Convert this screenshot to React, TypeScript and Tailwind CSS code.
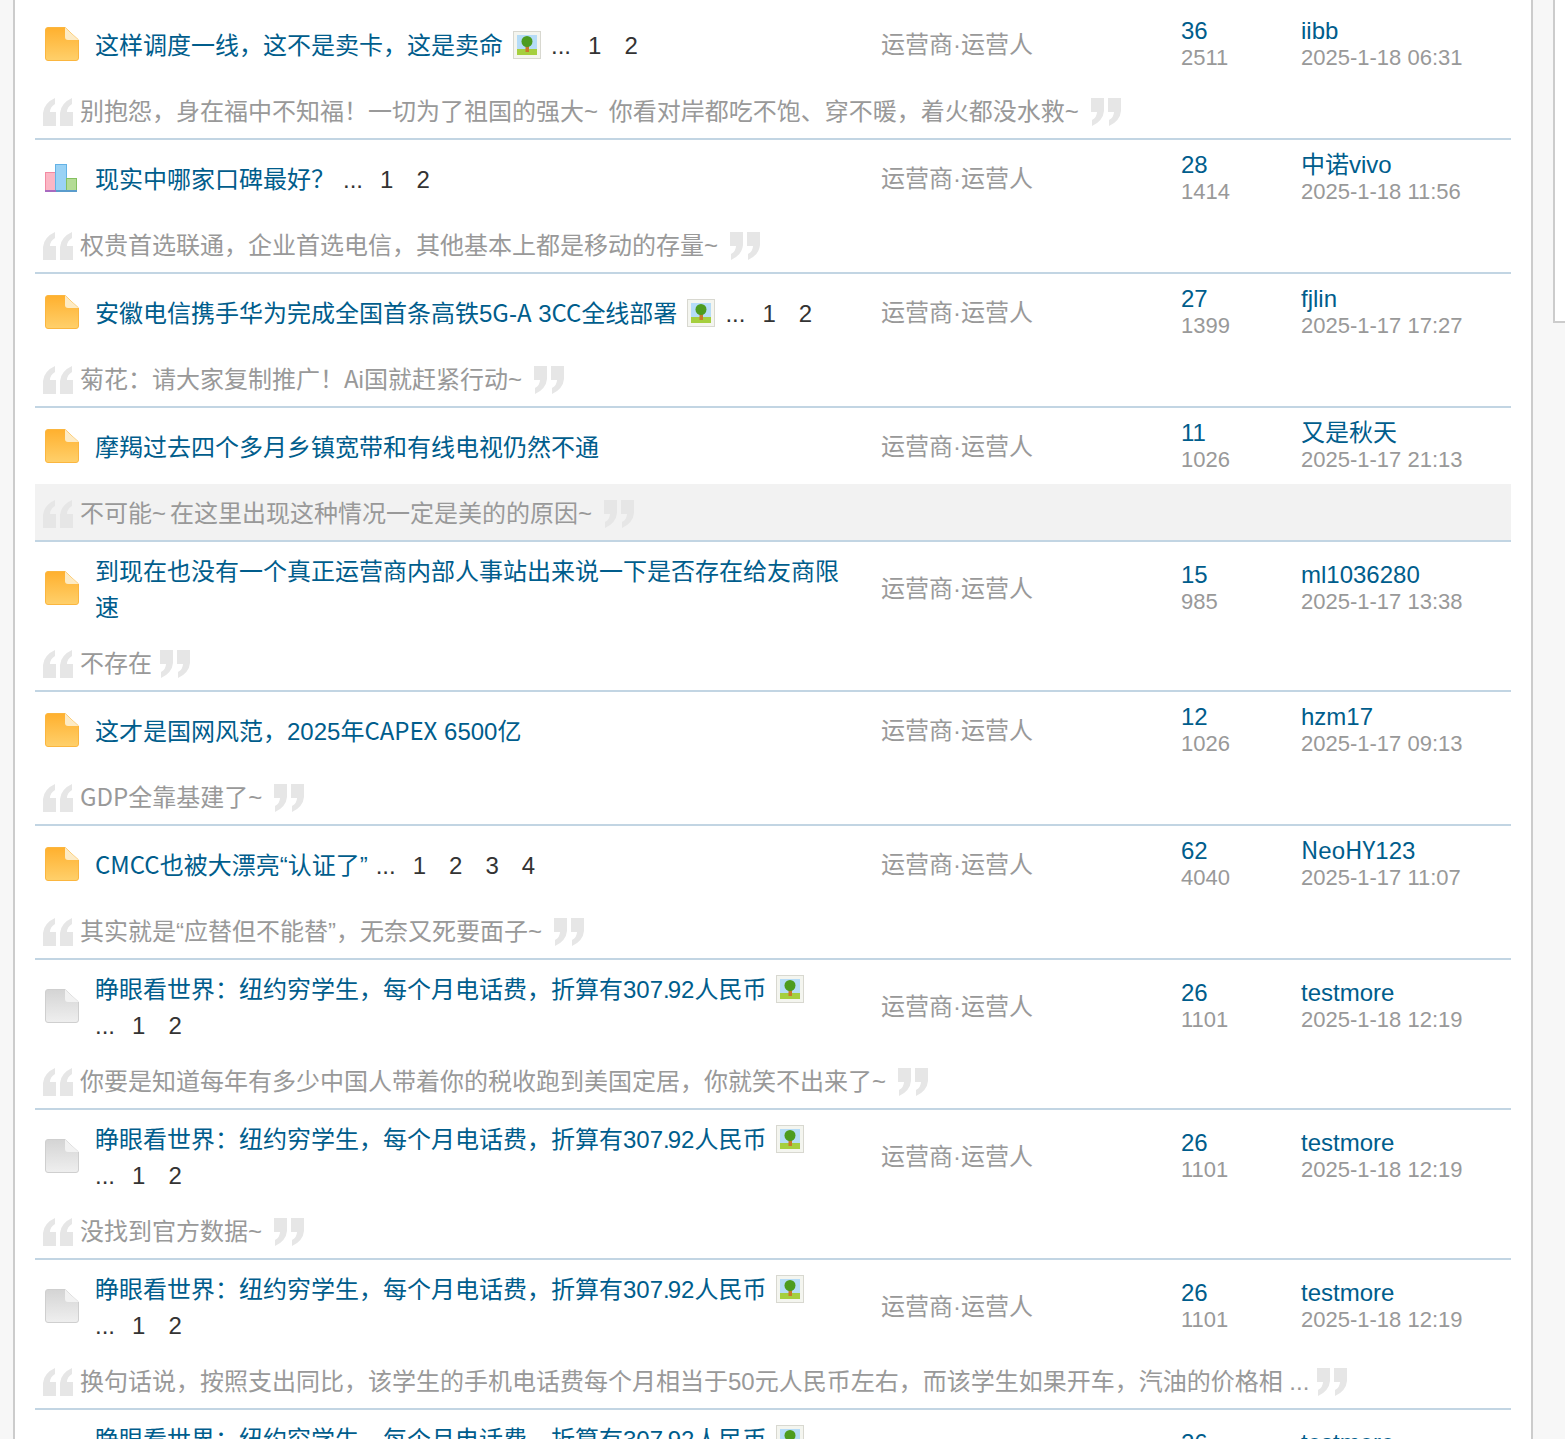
const Pic = () => (
  <svg width="28" height="28" viewBox="0 0 28 28" className="inline-block align-[-5px] mx-[10px]">
    <rect x="0.5" y="0.5" width="27" height="27" fill="#f4f5ef" stroke="#d8d8d0" />
    <rect x="4" y="4" width="20" height="20" fill="#b5dcf7" />
    <rect x="4" y="18" width="20" height="6" fill="#a5cf3e" />
    <rect x="12.5" y="13" width="3.5" height="8" fill="#c8782a" />
    <circle cx="14" cy="10.5" r="5.5" fill="#4d9c1e" />
  </svg>
);

const DocIcon = ({ gray }: { gray?: boolean }) => (
  <svg width="34" height="34" viewBox="0 0 34 34" className="shrink-0">
    <defs>
      <linearGradient id="orange" x1="0" y1="0" x2="0" y2="1">
        <stop offset="0" stopColor="#ffb02e" />
        <stop offset="1" stopColor="#ffd06b" />
      </linearGradient>
      <linearGradient id="silver" x1="0" y1="0" x2="0" y2="1">
        <stop offset="0" stopColor="#d4d4d4" />
        <stop offset="1" stopColor="#efefef" />
      </linearGradient>
    </defs>
    <path
      d="M3 0.5H20L33.5 13V31a2.5 2.5 0 0 1-2.5 2.5H3A2.5 2.5 0 0 1 0.5 31V3A2.5 2.5 0 0 1 3 0.5Z"
      fill={gray ? "url(#silver)" : "url(#orange)"}
      stroke={gray ? "#cfcfcf" : "#fbb63f"}
    />
    <path d="M20 0.5V10a3 3 0 0 0 3 3H33.5Z" fill={gray ? "#f2f2f2" : "#fdebc5"} />
  </svg>
);

const ChartIcon = () => (
  <svg width="34" height="34" viewBox="0 0 34 34" className="shrink-0">
    <rect x="0.5" y="11.5" width="10" height="18" fill="#fbb6c4" stroke="#f28aa2" />
    <rect x="10.5" y="3.5" width="11" height="26" fill="#9ad2f5" stroke="#64b2e6" />
    <rect x="21.5" y="17.5" width="10" height="12" fill="#b4dc96" stroke="#84c060" />
    <rect x="0" y="29" width="11" height="2" fill="#a86ac0" />
    <rect x="11" y="29" width="21" height="2" fill="#5a9ccc" />
  </svg>
);

const Quote = ({ close }: { close?: boolean }) => (
  <svg width="30" height="28" viewBox="0 0 30 28" className={close ? "shrink-0 rotate-180 ml-2" : "shrink-0 mr-[7px]"}>
    <path d="M0 28V15Q1 5 12 0V6Q7 9 7 14H13V28ZM17 28V15Q18 5 29 0V6Q24 9 24 14H30V28Z" fill="#e6e6e6" />
  </svg>
);

// capitals and the decimal point run narrower than Liberation in the original, tilde wider
const Txt = ({ text }: { text: string }) => (
  <>
    {text.split(/([A-Z]+|~|(?<=\d)\.(?=\d))/).map((part, i) =>
      part === "~" ? (
        <span key={i} className="tracking-[4px]">~</span>
      ) : part === "." ? (
        <span key={i} className="tracking-[-2px]">.</span>
      ) : /^[A-Z]/.test(part) ? (
        <span key={i} className="font-['Noto_Sans_CJK_SC'] leading-none">{part}</span>
      ) : (
        part
      )
    )}
  </>
);

type Row = {
  title: string;
  icon: "orange" | "gray" | "chart";
  pic?: boolean;
  pages?: string[];
  replies: number;
  views: number;
  author: string;
  time: string;
  quote: string;
  hover?: boolean;
};

const twoPages = ["1", "2"];

const rows: Row[] = [
  { title: "这样调度一线，这不是卖卡，这是卖命", icon: "orange", pic: true, pages: twoPages, replies: 36, views: 2511, author: "iibb", time: "2025-1-18 06:31", quote: "别抱怨，身在福中不知福！一切为了祖国的强大~ 你看对岸都吃不饱、穿不暖，着火都没水救~" },
  { title: "现实中哪家口碑最好？", icon: "chart", pages: twoPages, replies: 28, views: 1414, author: "中诺vivo", time: "2025-1-18 11:56", quote: "权贵首选联通，企业首选电信，其他基本上都是移动的存量~" },
  { title: "安徽电信携手华为完成全国首条高铁5G-A 3CC全线部署", icon: "orange", pic: true, pages: twoPages, replies: 27, views: 1399, author: "fjlin", time: "2025-1-17 17:27", quote: "菊花：请大家复制推广！Ai国就赶紧行动~" },
  { title: "摩羯过去四个多月乡镇宽带和有线电视仍然不通", icon: "orange", replies: 11, views: 1026, author: "又是秋天", time: "2025-1-17 21:13", quote: "不可能~在这里出现这种情况一定是美的的原因~", hover: true },
  { title: "到现在也没有一个真正运营商内部人事站出来说一下是否存在给友商限速", icon: "orange", replies: 15, views: 985, author: "ml1036280", time: "2025-1-17 13:38", quote: "不存在" },
  { title: "这才是国网风范，2025年CAPEX 6500亿", icon: "orange", replies: 12, views: 1026, author: "hzm17", time: "2025-1-17 09:13", quote: "GDP全靠基建了~" },
  { title: "CMCC也被大漂亮“认证了”", icon: "orange", pages: ["1", "2", "3", "4"], replies: 62, views: 4040, author: "NeoHY123", time: "2025-1-17 11:07", quote: "其实就是“应替但不能替”，无奈又死要面子~" },
  { title: "睁眼看世界：纽约穷学生，每个月电话费，折算有307.92人民币", icon: "gray", pic: true, pages: twoPages, replies: 26, views: 1101, author: "testmore", time: "2025-1-18 12:19", quote: "你要是知道每年有多少中国人带着你的税收跑到美国定居，你就笑不出来了~" },
  { title: "睁眼看世界：纽约穷学生，每个月电话费，折算有307.92人民币", icon: "gray", pic: true, pages: twoPages, replies: 26, views: 1101, author: "testmore", time: "2025-1-18 12:19", quote: "没找到官方数据~" },
  { title: "睁眼看世界：纽约穷学生，每个月电话费，折算有307.92人民币", icon: "gray", pic: true, pages: twoPages, replies: 26, views: 1101, author: "testmore", time: "2025-1-18 12:19", quote: "换句话说，按照支出同比，该学生的手机电话费每个月相当于50元人民币左右，而该学生如果开车，汽油的价格相 ..." },
  { title: "睁眼看世界：纽约穷学生，每个月电话费，折算有307.92人民币", icon: "gray", pic: true, pages: twoPages, replies: 26, views: 1101, author: "testmore", time: "2025-1-18 12:19", quote: "" },
];

const ThreadRow = ({ row }: { row: Row }) => (
  <div className="border-b-2 border-[#c2d5e3]">
    <div className="flex min-h-[76px] items-center py-[8.5px]">
      <div className="w-[60px] pl-[10px]">
        {row.icon === "chart" ? <ChartIcon /> : <DocIcon gray={row.icon === "gray"} />}
      </div>
      <div className="w-[786px] pr-[30px] pt-[3px] text-[24px] leading-[36px] text-[#333]">
        <a className="text-[#005d8c]"><Txt text={row.title} /></a>
        {row.pic && <Pic />}
        {row.pages && (
          <span className={row.pic ? "" : "ml-[8px]"}>
            ...
            {row.pages.map((p) => (
              <a key={p} className="ml-[17px] mr-[6px]">
                {p}
              </a>
            ))}
          </span>
        )}
      </div>
      <div className="w-[300px] pt-[2px] text-[24px] text-[#999]">运营商·运营人</div>
      <div className="w-[120px]">
        <div className="text-[24px] leading-[26px] text-[#005d8c]">{row.replies}</div>
        <div className="mt-px text-[22px] leading-[26px] text-[#999]">{row.views}</div>
      </div>
      <div>
        <div className="text-[24px] leading-[26px] text-[#005d8c]"><Txt text={row.author} /></div>
        <div className="mt-px text-[22px] leading-[26px] text-[#999]">{row.time}</div>
      </div>
    </div>
    <div className={`flex h-[56px] items-center pl-2 pt-1 text-[24px] text-[#999] ${row.hover ? "bg-[#f2f2f2]" : ""}`}>
      <Quote />
      <span><Txt text={row.quote} /></span>
      <Quote close />
    </div>
  </div>
);

export default function App() {
  return (
    <div className="relative h-[1439px] overflow-hidden bg-[#f7f7f7] font-['Liberation_Sans','Noto_Sans_CJK_SC',sans-serif]">
      <div className="ml-[13px] h-full w-[1520px] border-x-2 border-[#ccc] bg-white px-5 pt-[6px]">
        {rows.map((row, i) => (
          <ThreadRow key={i} row={row} />
        ))}
      </div>
      <div className="absolute left-[1553px] top-0 h-[323px] w-[20px] border-b-2 border-l-2 border-[#ccc] bg-white" />
    </div>
  );
}
